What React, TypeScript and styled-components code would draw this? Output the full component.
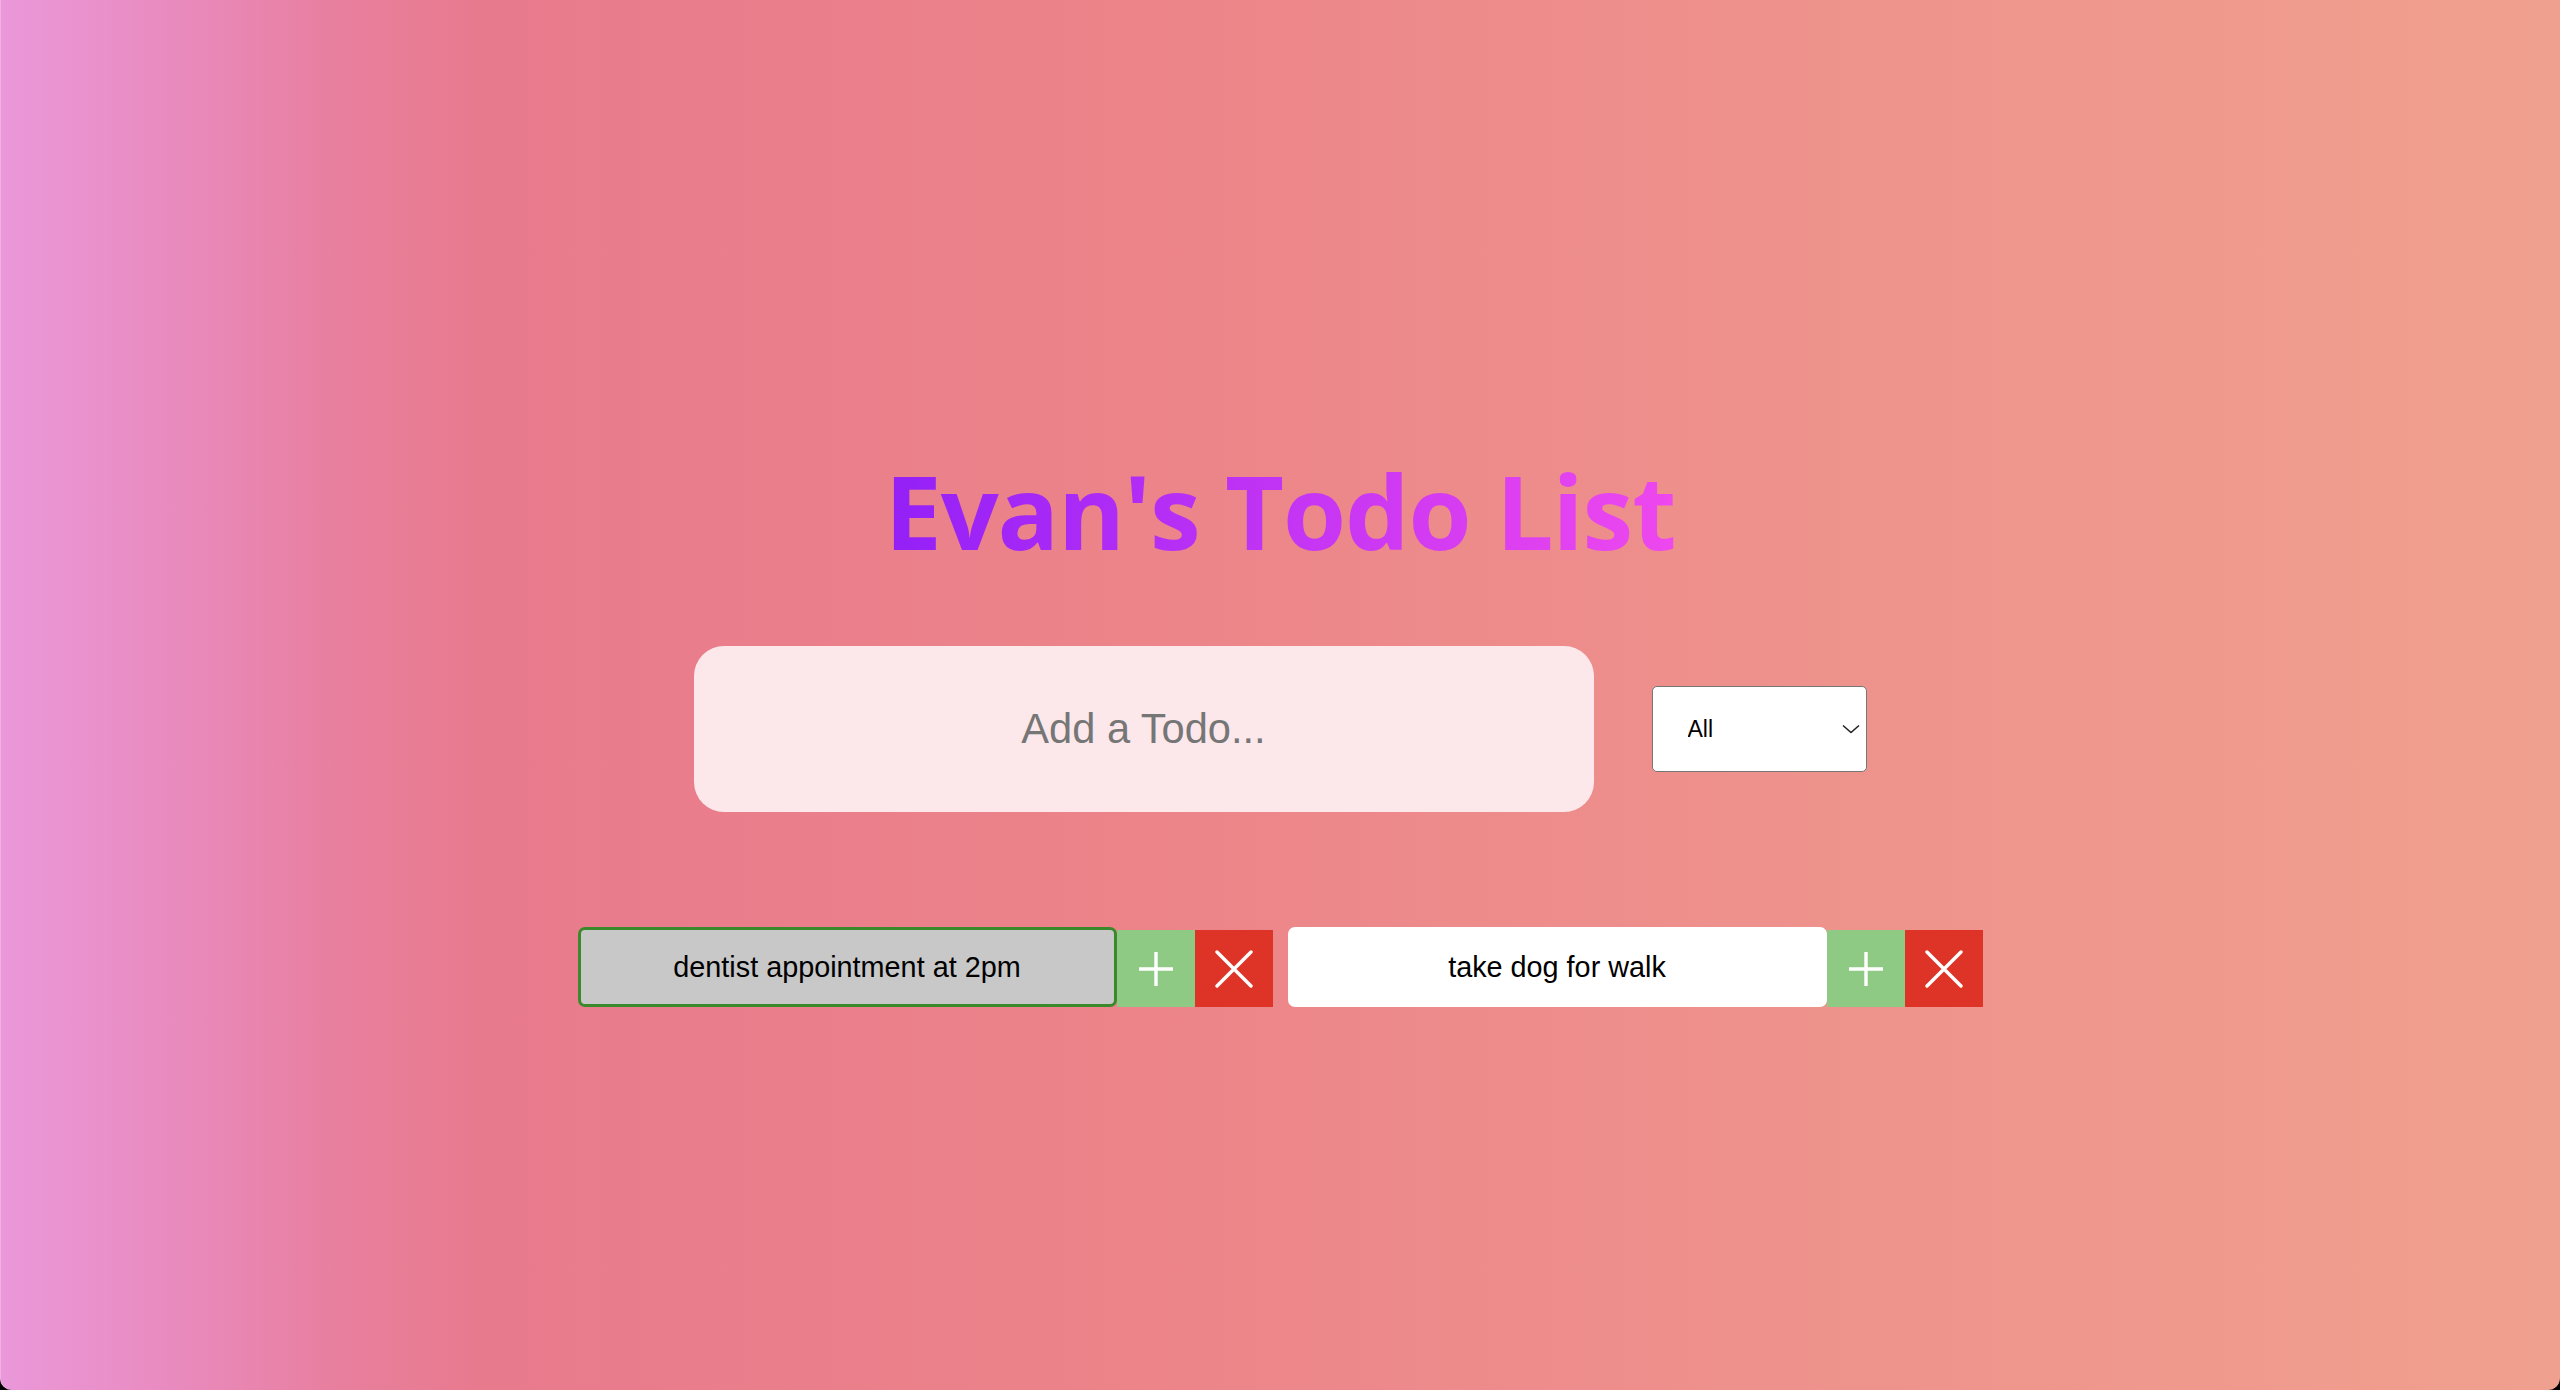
import React, { useState } from "react";
import styled, { createGlobalStyle } from "styled-components";

const GlobalStyle = createGlobalStyle`
  html, body {
    margin: 0;
    padding: 0;
    background: #000;
  }
  #root {
    min-height: 100vh;
  }
  * {
    box-sizing: border-box;
  }
`;

const Page = styled.div`
  height: 100vh;
  overflow: hidden;
  display: flex;
  flex-direction: column;
  align-items: center;
  background: linear-gradient(
    90deg,
    #ea98da 0%,
    #e98cc2 6%,
    #e87f9f 13%,
    #e87a8d 19%,
    #ec8489 45%,
    #ee8f8c 65%,
    #f0a08e 100%
  );
  border-radius: 0 0 12px 12px;
  box-shadow: inset 1px 0 0 rgba(255, 255, 255, 0.25);
  font-family: "Liberation Sans", Arial, sans-serif;
  padding-top: 451px;
`;

const Title = styled.h1`
  margin: 0;
  font-family: "Open Sans", "Lato", sans-serif;
  font-weight: 700;
  font-size: 102px;
  line-height: 120px;
  letter-spacing: -1.1px;
  background: linear-gradient(90deg, #9320f7 0%, #c234f4 50%, #ee48ee 100%);
  -webkit-background-clip: text;
  background-clip: text;
  color: transparent;
`;

const Form = styled.form`
  margin-top: 75px;
  display: flex;
  align-items: center;
  gap: 58px;
`;

const TodoInput = styled.input`
  width: 900px;
  height: 166px;
  border: none;
  border-radius: 30px;
  background: #fce8ea;
  font-family: "Liberation Sans", Arial, sans-serif;
  font-size: 41.6px;
  text-align: center;
  color: #222;
  outline: none;
  &::placeholder {
    color: #767676;
  }
`;

const SelectWrap = styled.div`
  position: relative;
  width: 215px;
  height: 86px;
`;

const Select = styled.select`
  appearance: none;
  -webkit-appearance: none;
  width: 100%;
  height: 100%;
  border: 1px solid #767676;
  border-radius: 5px;
  background: #fff;
  padding: 0 0 0 35px;
  font-family: "Liberation Sans", Arial, sans-serif;
  font-size: 23px;
  color: #000;
  outline: none;
`;

const Chevron = styled.svg`
  position: absolute;
  right: 7px;
  top: 50%;
  transform: translateY(-50%);
  pointer-events: none;
`;

const List = styled.ul`
  list-style: none;
  margin: 115px 0 0;
  padding: 0;
  display: flex;
  gap: 15px;
`;

const Item = styled.li`
  display: flex;
  align-items: flex-end;
`;

const ItemText = styled.div<{ $done?: boolean }>`
  width: 539px;
  height: 80px;
  display: flex;
  align-items: center;
  justify-content: center;
  border-radius: 7px;
  border: 3px solid ${(p) => (p.$done ? "#3a8a2b" : "#ffffff")};
  background: ${(p) => (p.$done ? "#c8c8c8" : "#ffffff")};
  font-size: 28.8px;
  color: #000;
`;

const IconButton = styled.button<{ $kind: "complete" | "delete" }>`
  width: 78px;
  height: 77px;
  border: none;
  padding: 0;
  margin: 0;
  display: flex;
  align-items: center;
  justify-content: center;
  background: ${(p) => (p.$kind === "complete" ? "#8fca84" : "#de3428")};
  cursor: pointer;
`;

const PlusIcon = () => (
  <svg width="36" height="36" viewBox="0 0 36 36">
    <path d="M18 1v34M1 18h34" stroke="#fff" strokeWidth="3.4" fill="none" />
  </svg>
);

const CloseIcon = () => (
  <svg width="38" height="38" viewBox="0 0 38 38">
    <path d="M2 2l34 34M36 2L2 36" stroke="#fff" strokeWidth="3.4" strokeLinecap="round" fill="none" />
  </svg>
);

type Todo = { id: number; text: string; done: boolean };

export default function App() {
  const [todos] = useState<Todo[]>([
    { id: 1, text: "dentist appointment at 2pm", done: true },
    { id: 2, text: "take dog for walk", done: false },
  ]);

  return (
    <>
      <GlobalStyle />
      <Page>
        <Title>Evan's Todo List</Title>
        <Form onSubmit={(e) => e.preventDefault()}>
          <TodoInput type="text" placeholder="Add a Todo..." />
          <SelectWrap>
            <Select defaultValue="all">
              <option value="all">All</option>
              <option value="completed">Completed</option>
              <option value="uncompleted">Uncompleted</option>
            </Select>
            <Chevron width="18" height="9" viewBox="0 0 18 9">
              <polyline points="1,1 9,8 17,1" fill="none" stroke="#222" strokeWidth="1.6" />
            </Chevron>
          </SelectWrap>
        </Form>
        <List>
          {todos.map((t) => (
            <Item key={t.id}>
              <ItemText $done={t.done}>{t.text}</ItemText>
              <IconButton $kind="complete" aria-label="complete">
                <PlusIcon />
              </IconButton>
              <IconButton $kind="delete" aria-label="delete">
                <CloseIcon />
              </IconButton>
            </Item>
          ))}
        </List>
      </Page>
    </>
  );
}
